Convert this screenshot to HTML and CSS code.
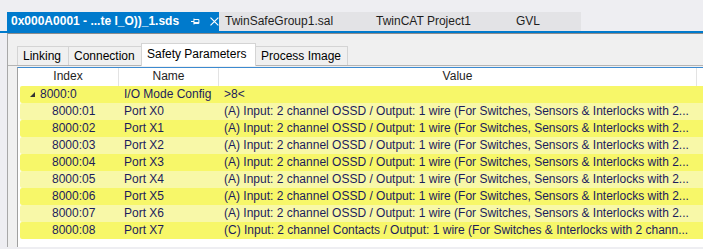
FILE: index.html
```html
<!DOCTYPE html>
<html>
<head>
<meta charset="utf-8">
<link rel="stylesheet" href="styles.css">
</head>
<body>
<div class="doctabs">
  <div class="doctab active">
    <span class="dt-title">0x000A0001 - ...te I_O))_1.sds</span>
    <svg class="pin" width="9" height="7" viewBox="0 0 9 7"><path d="M0 3.5H3M3 0.5V6.5M3 1.5H8V5.5H3M3 4.5H8" fill="none" stroke="#fff" stroke-width="1"/></svg>
    <svg class="close" width="9" height="9" viewBox="0 0 9 9"><path d="M0.5 0.5L8.5 8.5M8.5 0.5L0.5 8.5" stroke="#fff" stroke-width="1.2"/></svg>
  </div>
  <div class="doctab w1">TwinSafeGroup1.sal</div>
  <div class="doctab w2">TwinCAT Project1</div>
  <div class="doctab w3">GVL</div>
</div>
<div class="panel">
  <div class="tabs">
    <div class="tab">Linking</div>
    <div class="tab">Connection</div>
    <div class="tab sel">Safety Parameters</div>
    <div class="tab">Process Image</div>
  </div>
  <div class="page">
    <div class="list">
      <div class="hdr">
        <div class="hc c1">Index</div>
        <div class="hc c2">Name</div>
        <div class="hc c3">Value</div>
      </div>
      <div class="row y"><div class="c1 idx0"><svg class="tri" width="5" height="5" viewBox="0 0 5 5"><path d="M5 0V5H0Z" fill="#333"/></svg>8000:0</div><div class="c2">I/O Mode Config</div><div class="c3">&gt;8&lt;</div></div>
      <div class="row p"><div class="c1 idx">8000:01</div><div class="c2">Port X0</div><div class="c3">(A) Input: 2 channel OSSD / Output: 1 wire (For Switches, Sensors &amp; Interlocks with 2...</div></div>
      <div class="row y"><div class="c1 idx">8000:02</div><div class="c2">Port X1</div><div class="c3">(A) Input: 2 channel OSSD / Output: 1 wire (For Switches, Sensors &amp; Interlocks with 2...</div></div>
      <div class="row p"><div class="c1 idx">8000:03</div><div class="c2">Port X2</div><div class="c3">(A) Input: 2 channel OSSD / Output: 1 wire (For Switches, Sensors &amp; Interlocks with 2...</div></div>
      <div class="row y"><div class="c1 idx">8000:04</div><div class="c2">Port X3</div><div class="c3">(A) Input: 2 channel OSSD / Output: 1 wire (For Switches, Sensors &amp; Interlocks with 2...</div></div>
      <div class="row p"><div class="c1 idx">8000:05</div><div class="c2">Port X4</div><div class="c3">(A) Input: 2 channel OSSD / Output: 1 wire (For Switches, Sensors &amp; Interlocks with 2...</div></div>
      <div class="row y"><div class="c1 idx">8000:06</div><div class="c2">Port X5</div><div class="c3">(A) Input: 2 channel OSSD / Output: 1 wire (For Switches, Sensors &amp; Interlocks with 2...</div></div>
      <div class="row p"><div class="c1 idx">8000:07</div><div class="c2">Port X6</div><div class="c3">(A) Input: 2 channel OSSD / Output: 1 wire (For Switches, Sensors &amp; Interlocks with 2...</div></div>
      <div class="row y"><div class="c1 idx">8000:08</div><div class="c2">Port X7</div><div class="c3">(C) Input: 2 channel Contacts / Output: 1 wire (For Switches &amp; Interlocks with 2 chann...</div></div>
    </div>
  </div>
</div>
</body>
</html>
```

FILE: styles.css
```css
* { box-sizing: border-box; }
html, body { margin: 0; padding: 0; }
body {
  background: #eeeef2;
  width: 703px;
  height: 249px;
  overflow: hidden;
  font-family: "Liberation Sans", Arial, sans-serif;
}
.doctabs {
  margin-top: 12px;
  padding-left: 7px;
  display: flex;
  height: 21px;
  border-bottom: 2px solid #007acc;
}
.doctab {
  height: 19px;
  background: #e3e3e6;
  color: #1e1e1e;
  font-size: 12px;
  line-height: 19px;
  padding-left: 6px;
  white-space: nowrap;
}
.doctab.active {
  width: 212px;
  background: #007acc;
  color: #fff;
  font-weight: bold;
  padding-left: 4px;
  display: flex;
  align-items: center;
}
.dt-title { width: 178px; }
.pin { margin-left: 5px; }
.close { margin-left: 10px; }
.w1 { width: 151px; }
.w2 { width: 140px; }
.w3 { width: 71px; }
.panel {
  margin-left: 7px;
  height: 214px;
  background: #f0f0f0;
  border-left: 1px solid #a8a8a8;
  border-top: 1px solid #8c8c8c;
  padding-top: 8px;
}
.tabs {
  display: flex;
  align-items: flex-end;
  padding-left: 9px;
  height: 23px;
  font-size: 12px;
  color: #000;
}
.tab {
  height: 19px;
  line-height: 18px;
  padding: 0 5px;
  background: #f0f0f0;
  border: 1px solid #d4d4d4;
  border-bottom: none;
  margin-right: -1px;
}
.tab:first-child { width: 52px; }
.tab:nth-child(2) { width: 74px; }
.tab.sel {
  height: 23px;
  width: 115px;
  background: #fff;
  border-color: #d4d4d4;
  line-height: 21px;
  position: relative;
  z-index: 1;
  margin-bottom: -1px;
}
.tab:nth-child(4) { width: 93px; }
.page {
  border-top: 1px solid #b4b4b4;
  padding: 1px 0 0 9px;
  height: 182px;
}
.list {
  background: #fff;
  border-left: 1px solid #a0a0a0;
  border-top: 1px solid #3c8ad0;
  height: 180px;
  padding-left: 2px;
  font-size: 12px;
  color: #1c1c5c;
}
.hdr {
  display: flex;
  height: 18px;
  line-height: 17px;
  color: #1e1e1e;
  margin-left: -2px;
}
.hc { text-align: center; border-right: 1px solid #e3e3e3; }
.hdr .c1 { width: 101px; }
.hdr .c2 { width: 100px; }
.hdr .c3 { width: 478px; }
.row {
  display: flex;
  height: 17px;
  line-height: 17px;
  border-radius: 2px;
  white-space: nowrap;
  width: 690px;
}
.row.y { background: #f7f769; }
.row.p { background: #f8f8a8; }
.row .c1 { width: 99px; }
.row .c2 { width: 100px; padding-left: 5px; }
.row .c3 { padding-left: 5px; overflow: hidden; }
.idx { padding-left: 32px; }
.idx0 { padding-left: 10px; display: flex; align-items: center; }
.tri { margin-right: 5px; }
```
